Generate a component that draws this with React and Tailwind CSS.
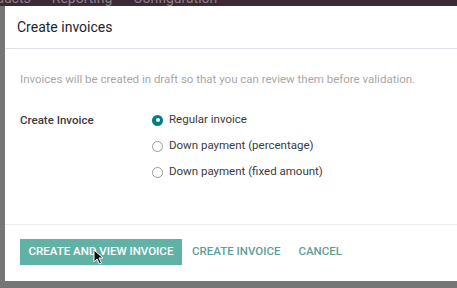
import React from "react";

const options = [
    {label: "Regular invoice", checked: true},
    {label: "Down payment (percentage)", checked: false},
    {label: "Down payment (fixed amount)", checked: false},
];

const Radio = ({checked}) =>
    checked ? (
        <span className="w-[11px] h-[11px] rounded-full bg-[#017e84] flex items-center justify-center">
            <span className="w-[4px] h-[4px] rounded-full bg-white"></span>
        </span>
    ) : (
        <span className="w-[11px] h-[11px] rounded-full border border-[#9a9a9a] bg-white"></span>
    );

const App = () => {
    return (
        <div className="w-[457px] h-[288px] overflow-hidden bg-[#767676] flex flex-col font-['Roboto',sans-serif] relative">
            {/* navbar behind backdrop */}
            <div className="h-[6px] bg-[#3b2a35] overflow-hidden shrink-0">
                <div className="flex gap-[21px] text-[14px] leading-[16px] text-[#8c8189] -mt-[10px] -ml-[4px]">
                    <span>ducts</span>
                    <span>Reporting</span>
                    <span>Configuration</span>
                </div>
            </div>

            <div className="flex h-[275px] shrink-0">
                <div className="w-[5px] bg-[#767676]"></div>

                {/* Modal */}
                <div className="flex-1 bg-white flex flex-col">
                    <div className="h-[43px] border-b border-[#dee2e6] flex items-center pl-[12px]">
                        <h4 className="text-[14px] text-[#212529]">Create invoices</h4>
                    </div>

                    <div className="flex-1 px-[15px] pt-[22px]">
                        <p className="text-[11.5px] text-[#a7a7a7] leading-[16px]">
                            Invoices will be created in draft so that you can review them before validation.
                        </p>

                        <div className="flex mt-[25px]">
                            <div className="w-[132px] text-[11.5px] font-medium text-[#3b3b3b] leading-[16px]">
                                Create Invoice
                            </div>
                            <div className="flex flex-col gap-[10px]">
                                {options.map((o) => (
                                    <div key={o.label} className="flex items-center gap-[6px] h-[16px]">
                                        <Radio checked={o.checked} />
                                        <span className="text-[11.5px] text-[#3b3b3b]">{o.label}</span>
                                    </div>
                                ))}
                            </div>
                        </div>
                    </div>

                    {/* Footer */}
                    <div className="h-[57px] border-t border-[#ececec] flex items-start pt-[14px] pl-[15px] gap-[10px]">
                        <button className="h-[26px] w-[162px] bg-[#61b2a6] text-white text-[11.5px] font-medium uppercase relative">
                            Create and view invoice
                            <svg className="absolute left-[73px] top-[10px]" width="11" height="16" viewBox="0 0 11 16">
                                <path d="M1 1 L1 13 L4 10 L6.5 15 L8.5 14 L6 9 L10 9 Z" fill="#111" stroke="#fff" strokeWidth="1" />
                            </svg>
                        </button>
                        <button className="h-[26px] text-[11.5px] font-medium text-[#5e9f96] uppercase">
                            Create invoice
                        </button>
                        <button className="h-[26px] ml-[8px] text-[11.5px] font-medium text-[#5e9f96] uppercase">
                            Cancel
                        </button>
                    </div>
                </div>
            </div>

            <div className="flex-1 bg-[#767676]"></div>
        </div>
    );
};

export default App;
